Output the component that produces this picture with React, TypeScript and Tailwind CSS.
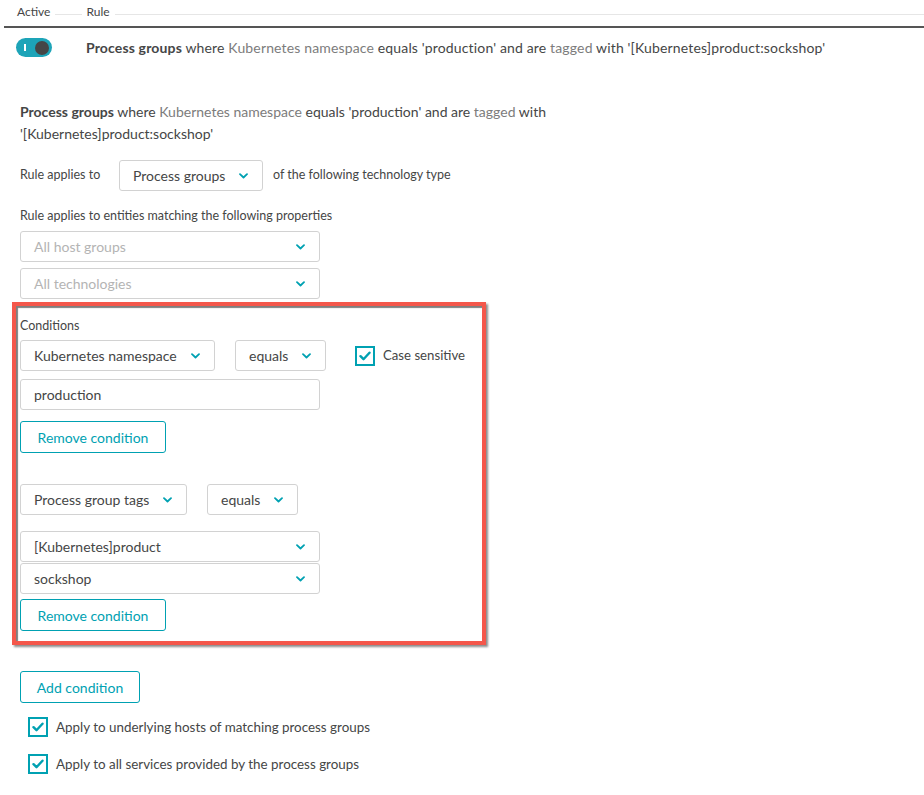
import type { ReactNode } from 'react';

const Chevron = () => (
  <svg width="9" height="6" viewBox="0 0 9 6" className="shrink-0">
    <path d="M1 1.2l3.5 3.3 3.5-3.3" fill="none" stroke="#00a1b2" strokeWidth="1.8" strokeLinecap="round" strokeLinejoin="round" />
  </svg>
);

function Select({ label, className = '', placeholder = false }: { label: string; className?: string; placeholder?: boolean }) {
  return (
    <div
      className={`flex h-[31px] items-center justify-between whitespace-nowrap rounded-[3px] border border-[#d2d2d2] bg-white pl-[13px] pr-[14px] text-[14px] ${
        placeholder ? 'text-[#b4b4b4]' : 'text-[#454646]'
      } ${className}`}
    >
      <span>{label}</span>
      <Chevron />
    </div>
  );
}

function Checkbox() {
  return (
    <div className="flex h-[20px] w-[20px] shrink-0 items-center justify-center border-2 border-[#00a1b2] bg-white">
      <svg width="12" height="10" viewBox="0 0 12 10">
        <path d="M1.5 5.2l3 3 6-6.5" fill="none" stroke="#00a1b2" strokeWidth="2.4" strokeLinecap="round" strokeLinejoin="round" />
      </svg>
    </div>
  );
}

function OutlineButton({ children, className = '' }: { children: ReactNode; className?: string }) {
  return (
    <button className={`h-[32px] whitespace-nowrap rounded-[3px] border border-[#00a1b2] bg-white px-[15px] text-[14px] text-[#00a1b2] ${className}`}>
      {children}
    </button>
  );
}

function RuleSummary() {
  return (
    <>
      <b className="font-bold text-[#454646]">Process groups</b> where <span className="text-[#7c7c7c]">Kubernetes namespace</span> equals
      'production' and are <span className="text-[#7c7c7c]">tagged</span> with '[Kubernetes]product:sockshop'
    </>
  );
}

export default function App() {
  return (
    <div className="min-h-[795px] w-[924px] bg-white text-[#454646]" style={{ fontFamily: 'Lato, "Open Sans", sans-serif' }}>
      {/* table header */}
      <div className="flex h-[26px] items-start pl-[17px] pt-[3px] text-[12px]">
        <div className="flex items-center">
          <span>Active</span>
          <div className="ml-[5px] mt-[5px] h-px w-[27px] bg-[#e6e6e6]" />
        </div>
        <div className="ml-[4px] flex flex-1 items-center">
          <span>Rule</span>
          <div className="ml-[5px] mt-[5px] h-px flex-1 bg-[#e6e6e6]" />
        </div>
      </div>
      <div className="ml-[4px] h-[2px] bg-[#555555]" />

      {/* rule row */}
      <div className="flex items-center pl-[16px] pt-[9px] text-[14px]">
        <div className="flex h-[19px] w-[36px] items-center justify-between rounded-full bg-[#1da4b8] pl-[8px] pr-[3px]">
          <div className="h-[7px] w-[1.5px] bg-white" />
          <div className="h-[14px] w-[14px] rounded-full bg-[#454646]" />
        </div>
        <div className="ml-[34px] tracking-[0.15px]">
          <RuleSummary />
        </div>
      </div>

      {/* detail */}
      <div className="px-[20px] pt-[43px]">
        <div className="w-[560px] text-[14px] leading-[22px]">
          <RuleSummary />
        </div>

        <div className="mt-[15px] flex items-center text-[12.5px]">
          <span className="w-[99px]">Rule applies to</span>
          <Select label="Process groups" className="w-[144px]" />
          <span className="ml-[10px]">of the following technology type</span>
        </div>

        <div className="mt-[16px] text-[12.5px] leading-[18px]">Rule applies to entities matching the following properties</div>
        <div className="mt-[6px] flex w-[300px] flex-col gap-[6px]">
          <Select label="All host groups" placeholder />
          <Select label="All technologies" placeholder />
        </div>
      </div>

      {/* conditions */}
      <div className="ml-[12px] mt-[3px] w-[474px] border-4 border-[#f4574b] px-[4px] pb-[10px] pt-[11px] shadow-[2px_2px_2px_rgba(0,0,0,0.45),inset_2px_2px_1px_rgba(0,0,0,0.5)]">
        <div className="text-[12.5px] leading-[18px]">Conditions</div>
        <div className="mt-[5px] flex items-center">
          <Select label="Kubernetes namespace" className="w-[195px]" />
          <Select label="equals" className="ml-[20px] w-[91px]" />
          <div className="ml-[29px] flex items-center">
            <Checkbox />
            <span className="ml-[8px] text-[13.2px]">Case sensitive</span>
          </div>
        </div>
        <div className="mt-[8px] flex h-[31px] w-[300px] items-center rounded-[3px] border border-[#d2d2d2] px-[13px] text-[14px]">
          production
        </div>
        <OutlineButton className="mt-[11px] w-[146px]">Remove condition</OutlineButton>

        <div className="mt-[31px] flex items-center">
          <Select label="Process group tags" className="w-[167px]" />
          <Select label="equals" className="ml-[20px] w-[91px]" />
        </div>
        <div className="mt-[16px] flex w-[300px] flex-col gap-[1px]">
          <Select label="[Kubernetes]product" />
          <Select label="sockshop" />
        </div>
        <OutlineButton className="mt-[5px] w-[146px]">Remove condition</OutlineButton>
      </div>

      <div className="px-[20px]">
        <OutlineButton className="mt-[26px] w-[120px]">Add condition</OutlineButton>
        <div className="ml-[8px] mt-[14px] flex items-center text-[13.4px]">
          <Checkbox />
          <span className="ml-[8px]">Apply to underlying hosts of matching process groups</span>
        </div>
        <div className="ml-[8px] mt-[17px] flex items-center text-[13.4px]">
          <Checkbox />
          <span className="ml-[8px]">Apply to all services provided by the process groups</span>
        </div>
      </div>
    </div>
  );
}
